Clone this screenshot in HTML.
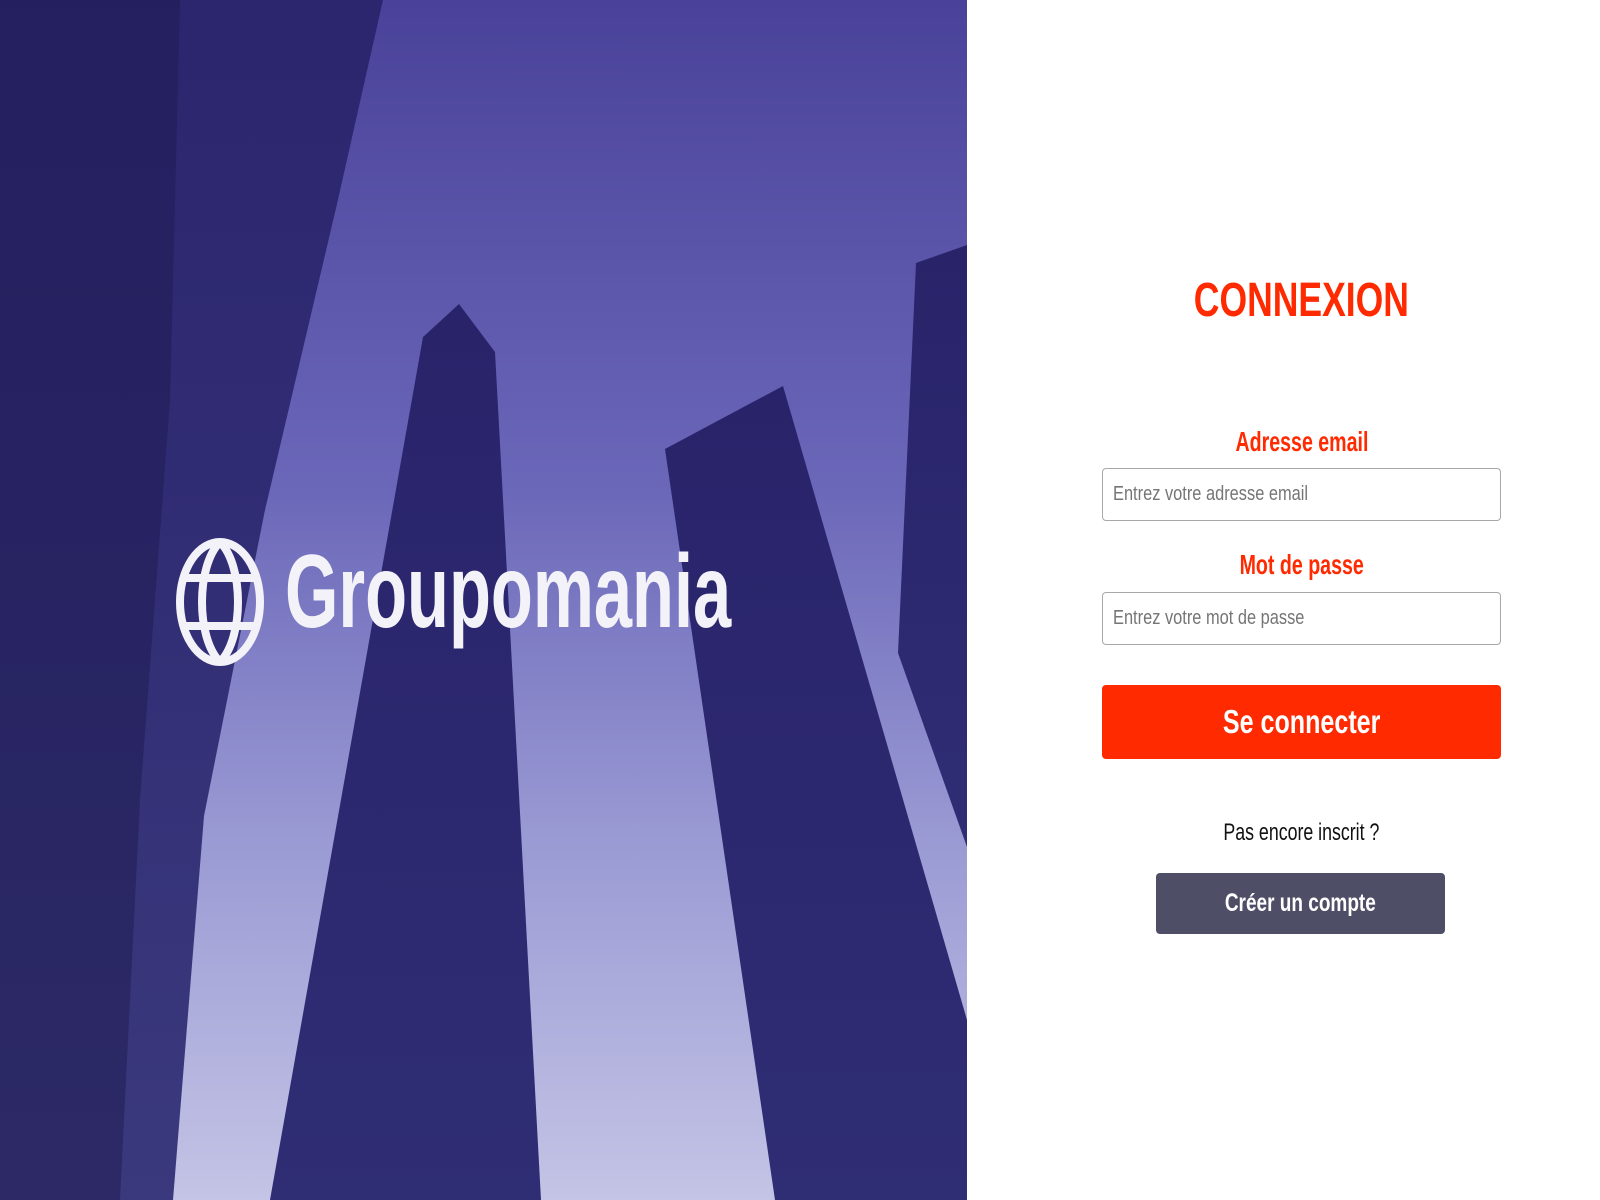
<!DOCTYPE html>
<html><head><meta charset="utf-8"><style>
html,body{margin:0;padding:0;width:1600px;height:1200px;overflow:hidden;background:#fff;font-family:"Liberation Sans",sans-serif}
#left{position:absolute;left:0;top:0;width:967px;height:1200px;background:linear-gradient(180deg,#4a429a 0%,#6a66b8 40%,#9a9ad4 70%,#c4c4e6 100%)}
#right{position:absolute;left:967px;top:0;width:633px;height:1200px;background:#fff}
.c{position:absolute;left:135px;width:399px;text-align:center;white-space:nowrap}
.cond{display:inline-block;transform:scaleX(.76)}
.inp{position:absolute;left:135px;width:399px;height:53px;border:1px solid #a8a8a8;border-radius:4px;box-sizing:border-box;color:#757575;font-size:20px;line-height:51px;padding-left:10px}
.inp span{display:inline-block;transform:scaleX(.82);transform-origin:left}
</style></head><body>
<div id="left">
<svg width="967" height="1200" viewBox="0 0 967 1200" style="position:absolute;left:0;top:0">
<defs><linearGradient id="g" x1="0" y1="0" x2="0" y2="1"><stop offset="0" stop-color="#29236a"/><stop offset="1" stop-color="#2f2d74"/></linearGradient></defs>
<polygon points="0,0 383,0 337,204 265,510 204,816 173,1200 0,1200" fill="url(#g)" opacity=".92"/>
<polygon points="0,0 180,0 170,400 140,800 120,1200 0,1200" fill="#1d1950" opacity=".5"/>
<polygon points="423,337 459,304 495,352 541,1200 270,1200" fill="url(#g)"/>
<polygon points="665,449 783,386 967,1020 967,1200 775,1200" fill="url(#g)"/>
<polygon points="916,263 967,245 967,847 898,653" fill="url(#g)"/>
</svg>
<svg width="92" height="132" viewBox="0 0 92 132" style="position:absolute;left:174px;top:536px" fill="none" stroke="#f2f2f8" stroke-width="8">
<ellipse cx="46" cy="66" rx="40" ry="60"/>
<path d="M46 6 C22 30 22 102 46 126 M46 6 C70 30 70 102 46 126 M8 42 H84 M8 90 H84"/>
</svg>
<div style="position:absolute;left:285px;top:532px;font-size:104px;font-weight:bold;color:#f2f2f8;line-height:120px;transform:scaleX(.66);transform-origin:left;white-space:nowrap">Groupomania</div>
</div>
<div id="right">
<div class="c" style="top:272px;font-size:48px;font-weight:bold;color:#ff2a00;line-height:58px"><span class="cond" style="transform:scaleX(.74)">CONNEXION</span></div>
<div class="c" style="top:425px;font-size:28px;font-weight:bold;color:#ff2a00;line-height:34px"><span class="cond" style="transform:scaleX(.7)">Adresse email</span></div>
<div class="inp" style="top:468px"><span>Entrez votre adresse email</span></div>
<div class="c" style="top:548px;font-size:28px;font-weight:bold;color:#ff2a00;line-height:34px"><span class="cond" style="transform:scaleX(.7)">Mot de passe</span></div>
<div class="inp" style="top:592px"><span>Entrez votre mot de passe</span></div>
<div style="position:absolute;left:135px;top:685px;width:399px;height:74px;background:#ff2a00;border-radius:4px;color:#fff;text-align:center;font-size:33px;font-weight:bold;line-height:74px"><span class="cond">Se connecter</span></div>
<div class="c" style="top:818px;font-size:24px;color:#111;line-height:30px"><span class="cond" style="transform:scaleX(.74)">Pas encore inscrit ?</span></div>
<div style="position:absolute;left:189px;top:873px;width:289px;height:61px;background:#4e4f66;border-radius:4px;color:#fff;text-align:center;font-size:25px;font-weight:bold;line-height:61px"><span class="cond">Créer un compte</span></div>
</div>
</body></html>
